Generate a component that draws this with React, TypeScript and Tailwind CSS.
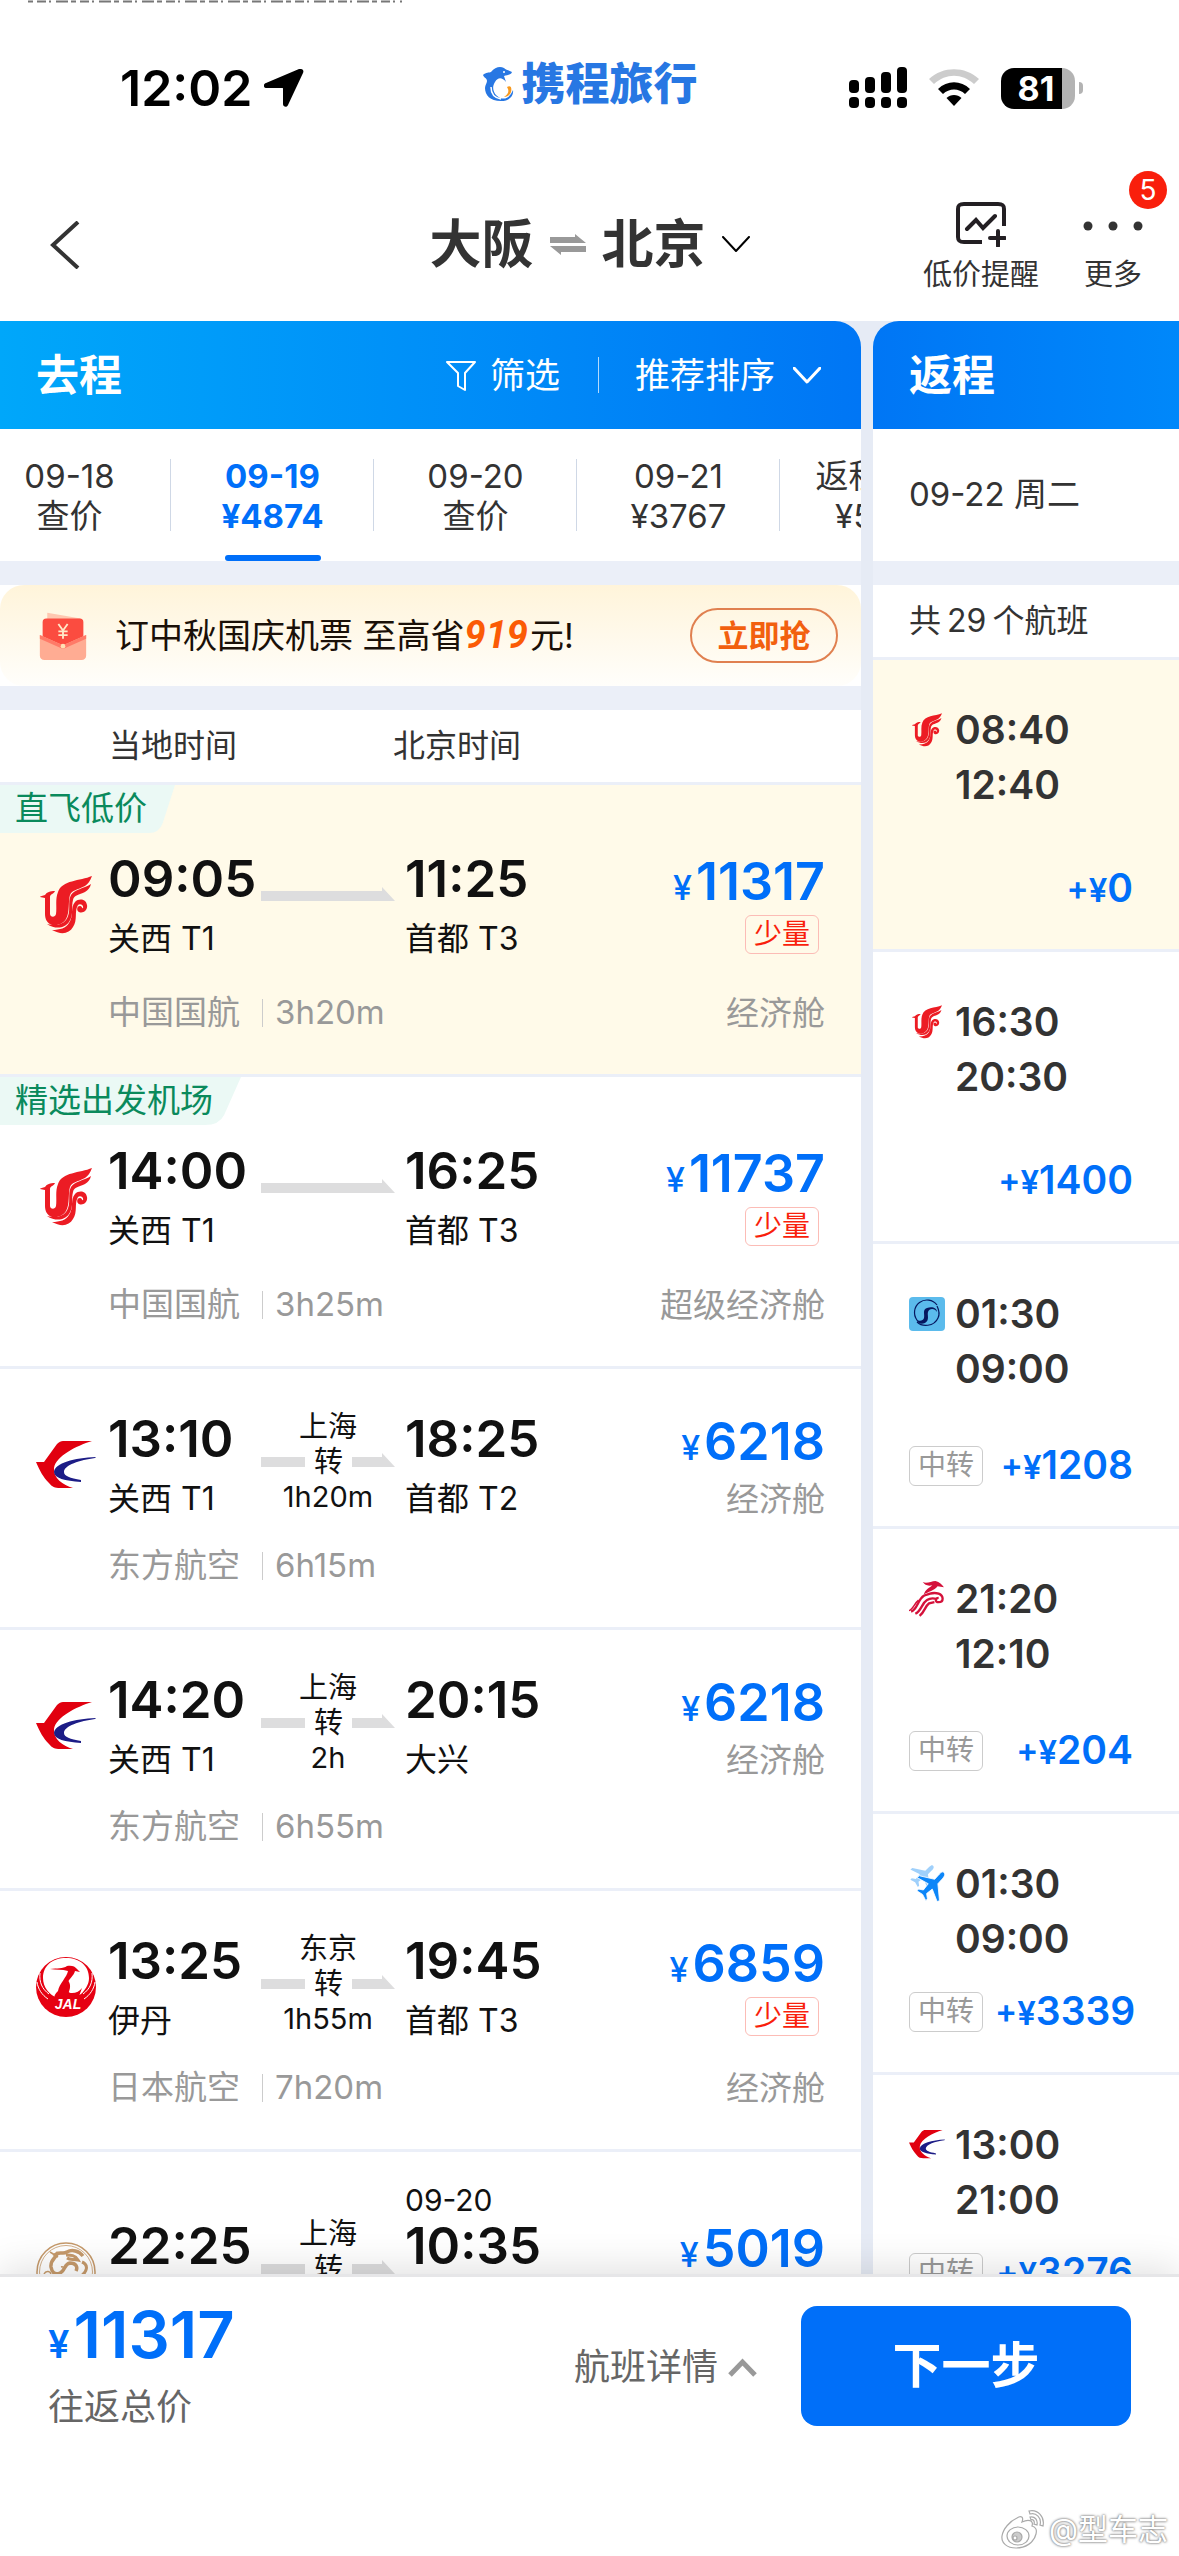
import { clsx } from "clsx";
import type { ReactNode } from "react";

type Carrier = "airchina" | "eastern" | "jal" | "juneyao" | "swirl" | "shenzhen" | "plane";

type Flight = {
  badge?: string;
  selected?: boolean;
  logo: Carrier;
  depTime: string;
  depAirport: string;
  arrDate?: string;
  arrTime: string;
  arrAirport: string;
  transfer?: { city: string; wait: string };
  airline: string;
  duration: string;
  price: string;
  few?: boolean;
  cabin: string;
};

const flights: Flight[] = [
  {
    badge: "直飞低价",
    selected: true,
    logo: "airchina",
    depTime: "09:05",
    depAirport: "关西 T1",
    arrTime: "11:25",
    arrAirport: "首都 T3",
    airline: "中国国航",
    duration: "3h20m",
    price: "11317",
    few: true,
    cabin: "经济舱",
  },
  {
    badge: "精选出发机场",
    logo: "airchina",
    depTime: "14:00",
    depAirport: "关西 T1",
    arrTime: "16:25",
    arrAirport: "首都 T3",
    airline: "中国国航",
    duration: "3h25m",
    price: "11737",
    few: true,
    cabin: "超级经济舱",
  },
  {
    logo: "eastern",
    depTime: "13:10",
    depAirport: "关西 T1",
    arrTime: "18:25",
    arrAirport: "首都 T2",
    transfer: { city: "上海", wait: "1h20m" },
    airline: "东方航空",
    duration: "6h15m",
    price: "6218",
    cabin: "经济舱",
  },
  {
    logo: "eastern",
    depTime: "14:20",
    depAirport: "关西 T1",
    arrTime: "20:15",
    arrAirport: "大兴",
    transfer: { city: "上海", wait: "2h" },
    airline: "东方航空",
    duration: "6h55m",
    price: "6218",
    cabin: "经济舱",
  },
  {
    logo: "jal",
    depTime: "13:25",
    depAirport: "伊丹",
    arrTime: "19:45",
    arrAirport: "首都 T3",
    transfer: { city: "东京", wait: "1h55m" },
    airline: "日本航空",
    duration: "7h20m",
    price: "6859",
    few: true,
    cabin: "经济舱",
  },
  {
    logo: "juneyao",
    depTime: "22:25",
    depAirport: "关西 T1",
    arrDate: "09-20",
    arrTime: "10:35",
    arrAirport: "大兴",
    transfer: { city: "上海", wait: "9h" },
    airline: "吉祥航空",
    duration: "13h10m",
    price: "5019",
    cabin: "经济舱",
  },
];

type ReturnFlight = {
  logo: Carrier;
  dep: string;
  arr: string;
  diff: string;
  stop?: boolean;
  selected?: boolean;
  className: string;
};

const returns: ReturnFlight[] = [
  { logo: "airchina", dep: "08:40", arr: "12:40", diff: "0", selected: true, className: "h-[292px]" },
  { logo: "airchina", dep: "16:30", arr: "20:30", diff: "1400", className: "h-[292px]" },
  { logo: "swirl", dep: "01:30", arr: "09:00", diff: "1208", stop: true, className: "h-[285px]" },
  { logo: "shenzhen", dep: "21:20", arr: "12:10", diff: "204", stop: true, className: "h-[285px]" },
  { logo: "plane", dep: "01:30", arr: "09:00", diff: "3339", stop: true, className: "h-[261px]" },
  { logo: "eastern", dep: "13:00", arr: "21:00", diff: "3276", stop: true, className: "h-[261px]" },
];

const dates = [
  { day: "09-18", price: "查价" },
  { day: "09-19", price: "¥4874", active: true },
  { day: "09-20", price: "查价" },
  { day: "09-21", price: "¥3767" },
  { day: "返程低价", price: "¥5019" },
];

const AirChina = () => (
  <svg viewBox="0 0 52 58" className="h-full w-full" fill="none">
    <path
      fill="#ec1c24"
      d="M52 0c-2 5-4 8-7 10-8 4-13 4-15 9-2 6 0 17-4 24-3 5-9 7-14 6-5-2-7-6-7-11V22l-5-1c0-1 3-1 5-2 2-3 5-4 10-4-1 3-5 3-5 6v17c0 3 5 4 6 0 1-7-1-15 2-22C22 4 40 5 52 0Z"
    />
    <path
      fill="#ec1c24"
      d="M51 8c-1 4-3 6-6 8-6 3-11 3-12 8-2 7 1 15-4 22-4 6-13 8-22 2 8 2 15 1 19-4 6-8 1-18 5-25 4-6 12-6 20-11Z"
    />
    <path
      fill="#ec1c24"
      d="M12 54c8 0 14-2 17-7 5-7 1-15 6-21 4-4 11-3 12 3 1 5-4 9-8 7-3-2-2-6 1-6 2 0 2 3 3 2 1-3-3-5-5-3-4 6 0 15-5 22-4 7-12 8-21 3Z"
    />
  </svg>
);

const Eastern = () => (
  <svg viewBox="0 0 60 48" className="w-full">
    <path
      fill="#e1000f"
      d="M0 21h8L21 3c2-2 4-3 6-3h29C40 5 20 15 18 27c-1 10 9 17 19 20H24c-5 0-8-1-11-5C7 36 4 30 0 21Z"
    />
    <path fill="#1c1c86" d="M60 16c-22 1-41 6-42 15 0 6 11 9 27 10v-2c-11-2-17-4-17-8 0-7 16-12 31-14Z" />
  </svg>
);

const Jal = () => (
  <svg viewBox="0 0 60 60" className="w-full">
    <circle cx="30" cy="30" r="30" fill="#e60012" />
    <path fill="#fff" d="M30 1C16 1 7 9 7 21c0 9 6 17 15 20 0-3 1-5 2-7 2-3 5-7 6-12 8 5 2 15 1 17 3 2 12 1 16-4 3-4 6-8 6-14C53 9 44 1 30 1Z" />
    <path
      fill="#e60012"
      d="M14 12c7-1 13 0 17-3 4-1 8 0 10 3l3 3-5-1c-1 5-7 8-8 14-1 6 1 8 5 8 4 0 8-2 10-5l-4 11H18c0-3 1-5 4-8 1-7 9-14 10-20-6-2-12-1-18-2Z"
    />
    <path
      d="M4 16c-1 9 2 16 9 21M1 25c1 7 5 13 11 17M56 16c1 9-2 16-9 21M59 25c-1 7-5 13-11 17"
      stroke="#fff"
      strokeWidth="1"
      fill="none"
    />
    <text
      x="32"
      y="52"
      fill="#fff"
      textAnchor="middle"
      className="font-['Liberation_Sans'] text-[14px] font-bold italic"
    >
      JAL
    </text>
  </svg>
);

const Juneyao = () => (
  <svg viewBox="0 0 60 60" className="w-full" fill="none" stroke="#c69a6b">
    <circle cx="30" cy="30" r="29" strokeWidth="1.5" />
    <circle cx="30" cy="30" r="26.5" strokeWidth="0.8" />
    <path strokeWidth="3.5" d="M18 14c4-6 9-1 13-4 5-3 12-1 16 4M22 10c-2 7-8 7-7 15 1 6 4 8 9 6 6-3 4-9 10-10 6 0 8 4 6 8" />
    <path strokeWidth="3" d="M30 13c5 0 9 0 12 5-5-1-8 0-11-2M46 20c7 3 5 10-1 14-6 5-18 1-26 5M17 44c8 4 22 5 29-6" />
    <path strokeWidth="1.5" d="M8 32c2-4 7-3 7 1M14 10l8 5M25 25c4-1 4 4 0 5" />
  </svg>
);

const Swirl = () => (
  <svg viewBox="0 0 36 34" className="w-full">
    <rect width="36" height="34" rx="4" fill="#5bbbec" />
    <path
      d="M28 8A12 12 0 0 0 8 23M8 25c5 5 17 5 21-4 2-4 1-8-1-12"
      fill="none"
      stroke="#06175f"
      strokeWidth="1.2"
    />
    <path
      fill="#06175f"
      d="M28 15c-2-4-8-4-9 0-1 3 2 8-3 11-4 2-8 0-9-4 3 3 7 2 8-1 1-4-2-8 3-10 5-2 10 0 10 4Z"
    />
  </svg>
);

const Shenzhen = () => (
  <svg viewBox="0 0 34 34" className="w-full" fill="none" stroke="#d4113a">
    <path fill="#d4113a" stroke="none" d="M13 1c4 2 8-1 12-1 4 1 6 3 8 6l-6-1c-3 4-9 5-13 8 1-5 6-7 8-9-4 1-7 0-9-3Z" />
    <path strokeWidth="2.2" d="M2 29c6-2 6-11 12-15 5-2 9-4 14-2s5 8 0 8c-4 0-3-4 0-4" />
    <path strokeWidth="2.2" d="M6 31c6-3 6-10 11-13 3-2 6-2 9-1M10 33c5-4 5-9 9-12l5-1" />
    <path strokeWidth="1.4" d="M0 28c4-1 5-7 9-10" />
  </svg>
);

const planePath = "M35 2c3 2 1 5-2 8l-5 5 2 19-3 1-6-14-7 5 1 6-2 2-4-7-7-4 2-2 6 1 6-7L2 8l3-2 19 4 6-6c2-2 4-3 5-2Z";

const Planes = () => (
  <svg viewBox="0 0 34 38" className="w-full">
    <path d={planePath} fill="#9fd0fb" transform="translate(0 1) scale(.64)" />
    <path d={planePath} fill="#0d86f8" stroke="#fff" strokeWidth="1" transform="translate(6 7) scale(.76 .84)" />
  </svg>
);

const logos: Record<Carrier, ReactNode> = {
  airchina: <AirChina />,
  eastern: <Eastern />,
  jal: <Jal />,
  juneyao: <Juneyao />,
  swirl: <Swirl />,
  shenzhen: <Shenzhen />,
  plane: <Planes />,
};

const Chevron = ({ className, stroke = 2 }: { className?: string; stroke?: number }) => (
  <svg viewBox="0 0 28 17" className={className} fill="none" stroke="currentColor" strokeWidth={stroke}>
    <path d="M1 1l13 14L27 1" strokeLinecap="round" strokeLinejoin="round" />
  </svg>
);

const StatusBar = () => (
  <div className="relative grid h-44 shrink-0 grid-cols-[1fr_auto_1fr] items-center px-24 text-black">
    {/* tail of the line scrolled under the top edge */}
    <svg className="absolute top-0 left-7 h-[3px] w-[374px]" preserveAspectRatio="none" viewBox="0 0 374 3">
      <path d="M0 1.5h374" stroke="#777" strokeWidth="2" strokeDasharray="5 4 9 3 2 5 12 3" />
    </svg>
    <div className="flex items-center gap-3 pl-6">
      <span className="text-[50px] font-semibold">12:02</span>
      <svg viewBox="0 0 40 38" className="h-[38px] w-10">
        <path d="M37 0c2 0 3 2 2 4L24 36c-1 3-5 2-5-1V20c0-1 0-1-1-1H3c-4 0-4-4-1-5L35 0Z" />
      </svg>
    </div>
    <div className="flex items-center gap-2 pb-2 text-[#2777e3]">
      <svg viewBox="0 0 32 36" className="h-9 w-8">
        <path
          fill="currentColor"
          d="M1 9c3-3 6-2 8-3 4-5 9-6 13-4 2 2 4 2 8 4-1 3-5 3-8 4l2 6c-4-5-8-5-11 0-4 6-1 13 5 16 6 2 10-1 13-8 1 7-5 11-12 11C8 35 3 29 3 22c0-3 2-5 2-7 0-3-3-3-4-6Z"
        />
        <circle cx="22" cy="6" r="1" fill="#fff" />
        <path d="M25 21c4-2 5 1 4 5-1 3-4 5-7 5 4-3 5-5 4-8Z" fill="#f8991d" />
        <path d="M9 21c0 7 4 11 10 12" stroke="#fff" strokeWidth="1.5" fill="none" />
      </svg>
      <span className="text-[44px] leading-none font-black">携程旅行</span>
    </div>
    <div className="flex items-center justify-end gap-[22px]">
      <svg viewBox="0 0 58 42" className="h-[42px] w-[58px]">
        <rect x="0" y="13" width="10" height="13" rx="4" />
        <rect x="16" y="10" width="10" height="16" rx="4" />
        <rect x="32" y="5" width="10" height="21" rx="4" />
        <rect x="48" y="0" width="10" height="26" rx="4" />
        <rect x="0" y="30" width="10" height="11" rx="4" />
        <rect x="16" y="30" width="10" height="11" rx="4" />
        <rect x="32" y="30" width="10" height="11" rx="4" />
        <rect x="48" y="30" width="10" height="11" rx="4" />
      </svg>
      <svg viewBox="0 0 50 38" className="h-[38px] w-[50px]">
        <path d="M0 10C14-3 36-3 50 10l-5 5C33 4 17 4 5 15Z" fill="#ccc" />
        <path d="M9 20c9-9 23-9 32 0l-5 5c-6-6-16-6-22 0Z" />
        <path d="M17.500 29c4-4 11-4 15 0L25 37Z" />
      </svg>
      <div className="flex items-center gap-1">
        <div className="flex h-[41px] w-[74px] items-center justify-center rounded-[13px] bg-linear-to-r from-black from-82% to-[#b3b3b3] to-82% pr-1 text-[34px] font-bold text-white">
          81
        </div>
        <div className="h-3 w-1 rounded-r-full bg-[#b3b3b3]" />
      </div>
    </div>
  </div>
);

const NavBar = () => (
  <header className="grid h-[145px] shrink-0 grid-cols-[1fr_auto_1fr] items-center px-9 pb-2 text-[#333]">
    <button aria-label="返回" className="justify-self-start pl-3">
      <svg viewBox="0 0 32 48" className="h-12 w-8" fill="none" stroke="currentColor" strokeWidth="4">
        <path d="M30 1L5 24l25 23" />
      </svg>
    </button>
    <button className="flex items-center gap-4 text-[52px] leading-none font-bold">
      <span>大阪</span>
      <svg viewBox="0 0 36 21" className="h-[21px] w-9" fill="#999">
        <path d="M0 3h25V0l11 9H0ZM36 18H11v3L0 12h36Z" />
      </svg>
      <span>北京</span>
      <Chevron className="h-[17px] w-7 text-black" />
    </button>
    <div className="flex items-center justify-end gap-11 pt-1 text-[29px]">
      <button className="flex flex-col items-center">
        <svg viewBox="0 0 50 48" className="h-12 w-[50px]" fill="none" stroke="#231f23" strokeWidth="4">
          <path d="M26 43H8c-4 0-6-1-6-5V10c0-4 2-5 6-5h34c4 0 6 1 6 5v17" />
          <path d="M11 30l9-9 7 8 12-12M42 32v15M34 39h15" strokeLinecap="round" />
        </svg>
        <span className="mt-2 leading-10">低价提醒</span>
      </button>
      <button className="relative flex flex-col items-center">
        <svg viewBox="0 0 60 48" className="h-12 w-15" fill="currentColor">
          <circle cx="5" cy="27" r="4.500" />
          <circle cx="30" cy="27" r="4.500" />
          <circle cx="55" cy="27" r="4.500" />
        </svg>
        <span className="mt-2 leading-10">更多</span>
        <span className="absolute -top-7 -right-6 size-[38px] rounded-full bg-[#f91f0c] text-center text-[28px] leading-[38px] text-white">
          5
        </span>
      </button>
    </div>
  </header>
);

const DateTabs = () => (
  <nav className="flex h-[132px] overflow-hidden bg-white">
    <div className="-ml-8 flex shrink-0">
      {dates.map((date) => (
        <button
          key={date.day}
          className={clsx(
            "relative flex w-[203px] shrink-0 flex-col items-center pt-[27px] text-[33px] leading-10",
            date.active ? "font-bold text-[#006ff9]" : "text-[#333]"
          )}
        >
          <span>{date.day}</span>
          <span>{date.price}</span>
          <span className="absolute top-[30px] right-0 h-18 w-px bg-[#cfd8e6]" />
          {date.active && <span className="absolute bottom-0 h-[6px] w-24 rounded-full bg-[#006ff9]" />}
        </button>
      ))}
    </div>
  </nav>
);

const Banner = () => (
  <div className="bg-white">
    <div className="flex h-[101px] items-center rounded-3xl bg-linear-to-b from-[#fff4da] to-[#fffefb] pr-[23px] pl-[38px]">
      <svg viewBox="0 0 54 54" className="size-[50px]">
        <path d="M10 2l36 6v20H10Z" fill="#ffc7b0" />
        <rect x="5" y="8" width="44" height="30" rx="4" fill="#fb4c40" />
        <path d="M2 26l25 11 25-11v22c0 3-2 5-5 5H7c-3 0-5-2-5-5Z" fill="#ffac93" />
        <path d="M2 26l25 11 25-11v4L27 41 2 30Z" fill="#ff7a68" />
        <circle cx="27" cy="38" r="2.500" fill="#ffe1b3" />
        <path d="M22 14l5 7 5-7M27 21v9M22 22h10M22 26h10" stroke="#ffe9c8" strokeWidth="2" fill="none" />
      </svg>
      <p className="ml-[27px] flex items-center text-[34px] whitespace-nowrap text-[#1a1008]">
        订中秋国庆机票 至高省
        <span className="mr-[2px] font-['Roboto'] text-[38px] font-bold text-[#fb5b05] italic">919</span>
        元!
      </p>
      <button className="ml-auto h-[55px] w-[148px] shrink-0 rounded-full border-2 border-[#e08050] text-[31px] leading-none font-bold text-[#f2600f]">
        立即抢
      </button>
    </div>
  </div>
);

const Route = ({ transfer }: Pick<Flight, "transfer">) => {
  if (!transfer) {
    return (
      <svg viewBox="0 0 134 14" className="mt-[38px] h-[14px] w-[134px]" fill="#ddddde">
        <path d="M0 4h121V0l13 14H0Z" />
      </svg>
    );
  }

  return (
    <span className="flex flex-col items-center text-[29px] leading-[35px]">
      <span>{transfer.city}</span>
      <span className="flex w-full items-center justify-between">
        <span className="h-[10px] w-11 bg-[#ddddde]" />
        <span>转</span>
        <svg viewBox="0 0 43 14" className="mb-1 h-[14px] w-[43px]" fill="#ddddde">
          <path d="M0 4h30V0l13 14H0Z" />
        </svg>
      </span>
      <span>{transfer.wait}</span>
    </span>
  );
};

const FlightRow = ({ flight }: { flight: Flight }) => {
  const cabin = <span className="text-[33px] leading-[48px] text-[#999]">{flight.cabin}</span>;
  const inline = !flight.few;

  return (
    <li className="border-b-[3px] border-[#ebeff8]">
      <button
        className={clsx(
          "relative block w-full pr-9 pb-10 pl-9 text-left text-[#111]",
          flight.badge || flight.arrDate ? "pt-16" : "pt-10",
          flight.selected && "bg-[#fffae9]"
        )}
      >
        {flight.badge && (
          <span className="absolute top-0 left-0 pr-7 pl-[15px] text-[33px] leading-[46px] text-[#0a8a5c]">
            <svg viewBox="0 0 100 48" preserveAspectRatio="none" className="absolute inset-0 h-12 w-full" fill="#ebf9f5">
              <path d="M0 0h100l-7 38q-2 10-8 10H0Z" />
            </svg>
            <span className="relative">{flight.badge}</span>
          </span>
        )}
        <span className="flex h-30">
          <span className="mr-3 flex h-28 w-15 items-center justify-center">
            <span className={clsx("block", flight.logo === "airchina" ? "h-[58px] w-[52px]" : "w-15")}>
              {logos[flight.logo]}
            </span>
          </span>
          <span className="flex w-[153px] flex-col">
            <span className="text-[51px] leading-[60px] font-semibold">{flight.depTime}</span>
            <span className="text-[32px] leading-[60px]">{flight.depAirport}</span>
          </span>
          <span className="mr-[10px] w-[134px]">
            <Route transfer={flight.transfer} />
          </span>
          <span className="flex flex-1 flex-col">
            {flight.arrDate && <span className="-mt-8 text-[30px] leading-8">{flight.arrDate}</span>}
            <span className="text-[51px] leading-[60px] font-semibold">{flight.arrTime}</span>
            <span className="text-[32px] leading-[60px]">{flight.arrAirport}</span>
          </span>
          <span className="flex flex-col items-end">
            <span className="flex h-[66px] items-baseline gap-1 text-[52px] leading-[66px] font-semibold text-[#006ff9]">
              <span className="text-[34px] leading-none font-medium">¥</span>
              {flight.price}
            </span>
            {flight.few && (
              <span className="mr-[6px] h-[39px] rounded-md border border-[#fcbcb6] px-2 text-[28px] leading-[36px] text-[#f91f0c]">
                少量
              </span>
            )}
            {inline && cabin}
          </span>
        </span>
        <span
          className={clsx(
            "flex h-[42px] items-center pl-18 text-[33px] text-[#999]",
            flight.badge ? "mt-[23px]" : "mt-4"
          )}
        >
          <span>{flight.airline}</span>
          <span className="mr-3 ml-[22px] h-7 w-px bg-[#ccc]" />
          <span className="flex-1">{flight.duration}</span>
          {!inline && cabin}
        </span>
      </button>
    </li>
  );
};

const ReturnRow = ({ flight }: { flight: ReturnFlight }) => (
  <li className={clsx("border-b-[3px] border-[#ebeff8]", flight.className)}>
    <button
      className={clsx(
        "flex h-full w-full flex-col pt-[42px] pr-[46px] pb-[34px] pl-9 text-left text-[#333]",
        flight.selected && "bg-[#fffae9]"
      )}
    >
      <span className="flex gap-[10px] text-[39px] leading-[55px] font-semibold">
        <span className="flex h-[55px] w-9 items-center justify-center">
          <span className={clsx("block", flight.logo === "airchina" ? "h-[34px] w-[30px]" : "w-9")}>
            {logos[flight.logo]}
          </span>
        </span>
        <span>
          {flight.dep}
          <br />
          {flight.arr}
        </span>
      </span>
      <span className="mt-auto flex items-center">
        {flight.stop && (
          <span className="h-10 shrink-0 rounded-md border border-[#ccc] px-2 text-[28px] leading-[36px] text-[#999]">
            中转
          </span>
        )}
        <span className="ml-auto pl-3 text-[39px] leading-[50px] font-semibold whitespace-nowrap text-[#006ff9]">
          <span className="text-[33px]">+¥</span>
          {flight.diff}
        </span>
      </span>
    </button>
  </li>
);

const Outbound = () => (
  <section className="min-w-0 flex-1 overflow-hidden bg-white">
    <div className="bg-[#e6ebf5]">
      <div className="flex h-27 items-center rounded-tr-[26px] bg-linear-to-r from-[#00a7fa] to-[#0076f5] pr-10 pl-9 text-[35px] text-white">
        <h2 className="mr-auto text-[43px] font-bold">去程</h2>
        <button className="flex items-center gap-[14px]">
          <svg viewBox="0 0 30 31" className="h-[31px] w-[30px]" fill="none" stroke="currentColor" strokeWidth="2">
            <path d="M1 2h28L19 13v17l-7-4V13Z" strokeLinejoin="round" />
          </svg>
          筛选
        </button>
        <span className="mr-9 ml-[38px] h-9 w-px bg-white/70" />
        <button className="flex items-center gap-[18px]">
          推荐排序
          <Chevron className="h-[17px] w-7" stroke={3} />
        </button>
      </div>
    </div>
    <DateTabs />
    <div className="border-y-24 border-[#ebeff8]">
      <Banner />
    </div>
    <div className="flex h-[75px] items-center border-b-[3px] border-[#ebeff8] pl-[109px] text-[32px] text-[#333]">
      <span className="w-[284px]">当地时间</span>
      <span>北京时间</span>
    </div>
    <ul>
      {flights.map((flight) => (
        <FlightRow key={flight.depTime} flight={flight} />
      ))}
    </ul>
  </section>
);

const Inbound = () => (
  <section className="w-[306px] shrink-0 overflow-hidden bg-white">
    <div className="bg-[#e6ebf5]">
      <h2 className="flex h-27 items-center rounded-tl-[26px] bg-linear-to-r from-[#0076f5] to-[#0088fa] pl-9 text-[43px] font-bold text-white">
        返程
      </h2>
    </div>
    <p className="flex h-[132px] items-center pl-9 text-[33px] text-[#333]">09-22 周二</p>
    <p className="flex h-[99px] items-center border-t-24 border-b-[3px] border-[#ebeff8] pl-9 text-[32px] text-[#333]">
      共<span className="mx-[6px]">29</span>个航班
    </p>
    <ul>
      {returns.map((flight) => (
        <ReturnRow key={flight.diff} flight={flight} />
      ))}
    </ul>
  </section>
);

const Footer = () => (
  <footer className="relative z-10 flex h-[282px] shrink-0 items-start border-t-[3px] border-[#e6e6e8] bg-white px-12 pt-[26px] shadow-[0_-6px_36px_rgba(0,0,0,0.12)]">
    <div>
      <div className="flex h-16 items-baseline gap-1 text-[65px] leading-16 font-semibold text-[#006ff9]">
        <span className="text-[38px] leading-none">¥</span>11317
      </div>
      <div className="mt-5 text-[36px] leading-10 text-[#666]">往返总价</div>
    </div>
    <button className="mt-[2px] ml-auto flex h-[124px] items-center gap-[10px] text-[36px] text-[#666]">
      航班详情
      <svg viewBox="0 0 29 20" className="h-5 w-[29px]" fill="none" stroke="#999" strokeWidth="5">
        <path d="M2 18L14.500 5 27 18" />
      </svg>
    </button>
    <button className="mt-[3px] ml-11 h-30 w-[330px] rounded-2xl bg-[#006ff9] text-[49px] font-bold text-white">
      下一步
    </button>
    <div className="absolute right-[11px] bottom-1 flex items-center gap-1 text-[30px] text-white [text-shadow:0_0_2px_#777,0_0_3px_#888]">
      <svg viewBox="0 0 44 42" className="h-[42px] w-11" fill="#fff" stroke="#aaa" strokeWidth="1.200">
        <path d="M16 9c4-3 7-1 5 4 6-3 12-2 10 4 4 1 5 4 4 8-2 9-11 14-20 14C6 39 0 34 1 27 2 20 9 12 16 9Z" />
        <ellipse cx="17" cy="27" rx="11" ry="9" />
        <circle cx="16" cy="28" r="5" fill="#ccc" />
        <circle cx="14" cy="29" r="2" />
        <path d="M28 2c9-2 16 6 14 15l-3-1c2-7-4-13-10-11ZM29 8c5-1 8 3 7 8l-3-1c1-3-1-5-3-4Z" />
      </svg>
      @型车志
    </div>
  </footer>
);

const App = () => {
  return (
    <main className="flex h-screen flex-col overflow-hidden bg-white font-['Inter','Noto_Sans_CJK_SC',sans-serif]">
      <StatusBar />
      <NavBar />
      <div className="flex min-h-0 flex-1 gap-3 overflow-hidden bg-[#e6ebf5]">
        <Outbound />
        <Inbound />
      </div>
      <Footer />
    </main>
  );
};

export default App;
